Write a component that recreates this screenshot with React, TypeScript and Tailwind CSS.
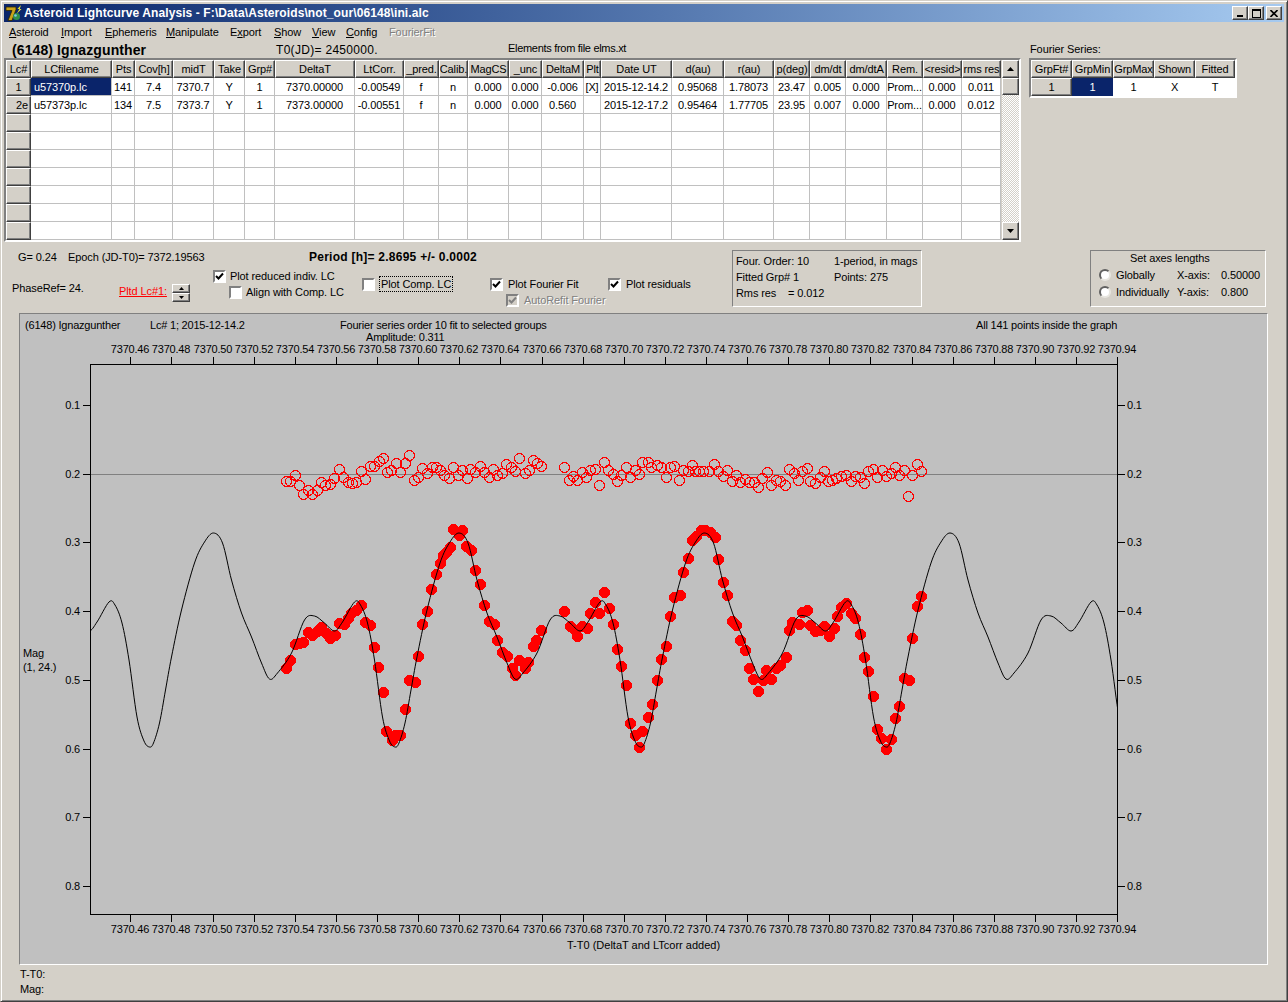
import React from 'react';

const raised = 'border border-t-white border-l-white border-r-[#404040] border-b-[#404040] shadow-[inset_-1px_-1px_0_#808080] bg-[#d4d0c8]';
const sunken = 'border-2 border-t-[#808080] border-l-[#808080] border-r-white border-b-white';
const etched = 'border border-t-[#808080] border-l-[#808080] border-r-white border-b-white';
const gridCols = 'grid grid-cols-[25px_81px_23px_38px_41px_31px_30px_80px_49px_35px_29px_41px_33px_42px_17px_71px_52px_50px_36px_36px_41px_36px_39px_39px]';

const headers = ['Lc#', 'LCfilename', 'Pts', 'Cov[h]', 'midT', 'Take', 'Grp#', 'DeltaT', 'LtCorr.', '_pred.', 'Calib.', 'MagCS', '_unc', 'DeltaM', 'Plt', 'Date UT', 'd(au)', 'r(au)', 'p(deg)', 'dm/dt', 'dm/dtA', 'Rem.', '<resid>', 'rms res'];
const rows = [
  ['1', 'u57370p.lc', '141', '7.4', '7370.7', 'Y', '1', '7370.00000', '-0.00549', 'f', 'n', '0.000', '0.000', '-0.006', '[X]', '2015-12-14.2', '0.95068', '1.78073', '23.47', '0.005', '0.000', 'Prom...', '0.000', '0.011'],
  ['2e', 'u57373p.lc', '134', '7.5', '7373.7', 'Y', '1', '7373.00000', '-0.00551', 'f', 'n', '0.000', '0.000', '0.560', '', '2015-12-17.2', '0.95464', '1.77705', '23.95', '0.007', '0.000', 'Prom...', '0.000', '0.012'],
  ...Array.from({ length: 7 }, () => Array.from({ length: 24 }, () => '')),
];

const menu = [
  { label: 'Asteroid', key: 'A', width: 'w-[52px]' },
  { label: 'Import', key: 'I', width: 'w-[44px]' },
  { label: 'Ephemeris', key: 'E', width: 'w-[61px]' },
  { label: 'Manipulate', key: 'M', width: 'w-[64px]' },
  { label: 'Export', key: 'x', width: 'w-[44px]' },
  { label: 'Show', key: 'S', width: 'w-[38px]' },
  { label: 'View', key: 'V', width: 'w-[34px]' },
  { label: 'Config', key: 'C', width: 'w-[43px]' },
];

// one cycle of the fit, in screen pixels, repeated across the plot
const PERIOD = 245.5;
const cycle: [number, number][] = [
  [395, 747], [399, 743], [405, 723], [411, 690], [417, 657], [427, 610], [440, 563], [450, 542], [459, 533], [468, 543], [477, 580], [487, 613],
  [497, 637], [507, 663], [515, 679], [523, 673], [537, 653], [550, 620], [560, 616], [570, 623], [580, 631], [588, 622], [600, 602],
  [606, 605], [613, 623], [620, 660], [628, 717], [635, 741],
];

function curvePath() {
  const pts: [number, number][] = [];
  for (let k = -2; k <= 3; k++) cycle.forEach(([x, y]) => pts.push([x + k * PERIOD, y]));
  let d = `M${pts[0][0]},${pts[0][1]}`;
  for (let i = 0; i < pts.length - 1; i++) {
    const p0 = pts[Math.max(i - 1, 0)];
    const p1 = pts[i];
    const p2 = pts[i + 1];
    const p3 = pts[Math.min(i + 2, pts.length - 1)];
    d += ` C${p1[0] + (p2[0] - p0[0]) / 6},${p1[1] + (p2[1] - p0[1]) / 6} ${p2[0] - (p3[0] - p1[0]) / 6},${p2[1] - (p3[1] - p1[1]) / 6} ${p2[0]},${p2[1]}`;
  }
  return d;
}

// measured off the 3x crops: [crop x, crop y]; crops start at (260,440) and (590,440)
const filledA = [[80,686],[92,660],[105,612],[118,610],[130,607],[145,578],[158,585],[172,575],[185,563],[198,580],[212,595],[225,585],[237,550],[252,553],[265,535],[275,520],[290,510],[305,495],[317,548],[332,557],[343,622],[355,683],[370,757],[380,875],[397,902],[405,885],[420,885],[437,808],[447,722],[465,727],[475,650],[487,553],[502,515],[514,448],[530,403],[541,370],[550,347],[560,338],[570,323],[580,268],[607,270],[597,287],[620,320],[635,332],[647,390],[660,432],[673,495],[687,545],[703,553],[712,601],[727,637],[742,650],[757,685],[765,705],[795,685],[778,660],[805,667],[820,618],[830,600],[845,572],[913,514],[930,560],[945,572],[953,588],[967,560],[982,566],[992,520],[1005,487],[1018,520],[1033,457]];
const filledB = [[57,505],[70,552],[82,628],[94,680],[109,737],[121,850],[135,885],[148,923],[158,873],[175,832],[187,793],[202,720],[214,657],[229,620],[241,529],[252,472],[270,465],[281,397],[295,354],[307,300],[320,290],[333,270],[345,272],[360,278],[375,292],[385,358],[400,427],[412,465],[428,545],[440,555],[451,602],[466,630],[478,685],[491,718],[505,753],[520,720],[530,692],[545,718],[560,685],[572,675],[588,652],[598,570],[607,547],[627,552],[637,518],[652,510],[662,555],[675,575],[690,570],[703,560],[718,590],[733,565],[742,528],[755,503],[768,490],[785,520],[797,535],[812,583],[823,652],[835,694],[850,769],[862,867],[875,895],[888,928],[905,898],[917,835],[928,798],[942,714],[957,720],[968,595],[983,498],[994,468]];
const openA = [[78,123],[92,123],[106,106],[118,135],[130,163],[145,150],[157,163],[172,152],[184,127],[197,137],[212,133],[223,115],[238,88],[250,113],[264,128],[277,129],[290,126],[304,94],[316,118],[330,80],[343,80],[357,65],[371,55],[382,98],[395,90],[409,70],[422,96],[437,70],[449,46],[462,122],[476,112],[487,84],[503,100],[516,83],[530,82],[541,92],[553,106],[568,115],[579,82],[596,105],[607,90],[622,115],[632,88],[647,96],[660,80],[673,97],[688,113],[701,87],[712,107],[727,100],[740,73],[753,83],[767,94],[778,55],[795,100],[808,90],[820,60],[832,70],[845,79],[913,82],[927,122],[940,110],[953,122],[967,97],[979,112],[992,92],[1005,87],[1018,135],[1033,67],[1045,92]];
const openB = [[69,102],[81,125],[94,106],[109,82],[121,112],[135,90],[148,102],[158,67],[174,67],[185,82],[203,75],[214,82],[229,112],[241,82],[253,80],[268,120],[280,92],[294,95],[307,75],[315,93],[327,93],[340,93],[358,93],[373,72],[385,95],[400,110],[412,90],[426,124],[438,105],[452,127],[466,118],[478,127],[492,127],[505,143],[518,115],[533,97],[545,135],[558,122],[570,125],[586,135],[598,87],[612,100],[626,120],[637,95],[652,85],[662,124],[677,130],[690,113],[703,93],[716,125],[727,120],[740,115],[755,110],[768,105],[783,125],[797,108],[810,113],[823,130],[835,95],[850,87],[862,113],[878,90],[890,108],[903,100],[916,83],[928,107],[943,92],[955,170],[968,107],[983,72],[994,95]];

const toScreen = (list: number[][], ox: number) => list.map(([x, y]) => [Math.floor(ox + x / 3) + 0.5, Math.floor(440 + y / 3) + 0.5]);
const filled = [...toScreen(filledA, 260), ...toScreen(filledB, 590)];
const open = [...toScreen(openA, 260), ...toScreen(openB, 590)];

const xTicks = Array.from({ length: 25 }, (_, i) => ({ x: Math.round(130.3 + i * 41.12), label: (7370.46 + i * 0.02).toFixed(2) }));
const yTicks = [0.1, 0.2, 0.3, 0.4, 0.5, 0.6, 0.7, 0.8].map((v, i) => ({ y: Math.round(405 + i * 68.7), label: v.toFixed(1) }));

function Check({ checked, disabled }: { checked?: boolean; disabled?: boolean }) {
  return (
    <span className={`${sunken} flex h-[13px] w-[13px] shrink-0 items-center justify-center ${disabled ? 'bg-[#d4d0c8]' : 'bg-white'}`}>
      {checked && (
        <svg width="9" height="9" viewBox="0 0 9 9">
          <path d="M1 4 L3.5 6.5 L8 1.5" fill="none" stroke={disabled ? '#808080' : '#000'} strokeWidth="2" />
        </svg>
      )}
    </span>
  );
}

function Radio() {
  return <span className="h-[12px] w-[12px] shrink-0 rounded-full border-2 border-t-[#606060] border-l-[#606060] border-r-[#e8e6e0] border-b-[#e8e6e0] bg-white" />;
}

function Tri({ down, size = 7 }: { down?: boolean; size?: number }) {
  return (
    <svg width={size} height={Math.ceil(size / 2)} viewBox="0 0 7 4">
      <path d={down ? 'M0 0 H7 L3.5 4 Z' : 'M0 4 H7 L3.5 0 Z'} fill="#000" />
    </svg>
  );
}

function AppIcon() {
  return (
    <svg width="17" height="17" viewBox="0 0 17 17" className="shrink-0">
      <path d="M1 2 H11 V4.5 L7 15.5 H3 L7 5.5 H1 Z" fill="#c9a21a" stroke="#2e2600" strokeWidth="0.8" />
      <path d="M16 0 L12.5 4 L14.5 4 L11.5 9 L16.5 4 L14.7 4 Z" fill="#f5ee30" />
      <circle cx="11.5" cy="11.5" r="3.5" fill="#2f8f4a" />
      <circle cx="10.5" cy="10.5" r="1.3" fill="#7fc7e8" />
    </svg>
  );
}

export default function App() {
  return (
    <div className="h-[1002px] w-[1288px] overflow-hidden border border-t-[#d4d0c8] border-l-[#d4d0c8] border-r-[#404040] border-b-[#404040] bg-[#d4d0c8] p-[3px] font-['Liberation_Sans',sans-serif] text-[11px] leading-[14px] tracking-[-0.1px] text-black shadow-[inset_1px_1px_0_#fff,inset_-1px_-1px_0_#808080]">
      {/* title bar */}
      <div className="flex h-[18px] items-center bg-linear-to-r from-[#0a246a] to-[#a6caf0] pl-[1px] pr-[2px]">
        <AppIcon />
        <span className="ml-[2px] whitespace-nowrap text-[12px] font-bold tracking-[0.1px] text-white">Asteroid Lightcurve Analysis - F:\Data\Asteroids\not_our\06148\ini.alc</span>
        <div className="ml-auto flex items-center">
          <button className={`${raised} flex h-[14px] w-[16px] items-end justify-center pb-[2px]`}>
            <span className="h-[2px] w-[6px] bg-black" />
          </button>
          <button className={`${raised} flex h-[14px] w-[16px] items-center justify-center`}>
            <span className="h-[9px] w-[9px] border border-t-2 border-black" />
          </button>
          <button className={`${raised} ml-[2px] flex h-[14px] w-[16px] items-center justify-center`}>
            <svg width="8" height="7" viewBox="0 0 8 7"><path d="M0.5 0 L7.5 7 M7.5 0 L0.5 7" stroke="#000" strokeWidth="1.6" /></svg>
          </button>
        </div>
      </div>

      {/* menu */}
      <div className="flex h-[19px] items-center pl-[5px]">
        {menu.map((m) => (
          <span key={m.label} className={m.width}>
            {m.label.split(m.key).map((part, i) => (i === 0 ? part : <React.Fragment key={i}><u>{m.key}</u>{part}</React.Fragment>))}
          </span>
        ))}
        <span className="text-[#808080] [text-shadow:1px_1px_0_#fff]">FourierFit</span>
      </div>

      {/* grids */}
      <div className="flex">
        <div className="w-[1017px]">
          <div className="flex h-[17px] items-center">
            <span className="ml-[8px] w-[264px] whitespace-nowrap text-[14px] font-bold tracking-[0.1px]">(6148) Ignazgunther</span>
            <span className="w-[232px] text-[12px] tracking-[0.3px]">T0(JD)= 2450000.</span>
            <span className="-mt-[4px] tracking-[-0.3px]">Elements from file elms.xt</span>
          </div>
          <div className={`${sunken} flex bg-[#d4d0c8]`}>
            <div className="w-[995px] bg-white">
              <div className={gridCols}>
                {headers.map((h) => (
                  <div key={h} className={`${raised} flex h-[18px] items-center justify-center whitespace-nowrap overflow-hidden`}>{h}</div>
                ))}
              </div>
              {rows.map((row, r) => (
                <div key={r} className={gridCols}>
                  {row.map((cell, c) =>
                    c === 0 ? (
                      <div key={c} className={`${raised} flex h-[18px] items-center ${cell === '2e' ? 'justify-end pr-[2px]' : 'justify-center'}`}>{cell}</div>
                    ) : (
                      <div
                        key={c}
                        className={`flex h-[18px] items-center overflow-hidden whitespace-nowrap border-r border-b border-[#c0c0c0] ${c === 1 ? 'justify-start pl-[3px]' : 'justify-center'} ${c === 1 && r === 0 ? 'bg-[#0a246a] text-white' : ''}`}
                      >
                        {cell}
                      </div>
                    ),
                  )}
                </div>
              ))}
            </div>
            <div className="ml-[1px] flex w-[17px] flex-col bg-[repeating-conic-gradient(#d4d0c8_0_25%,#fff_0_50%)] bg-[length:2px_2px]">
              <div className={`${raised} flex h-[18px] items-center justify-center`}><Tri /></div>
              <div className={`${raised} h-[17px]`} />
              <div className={`${raised} mt-auto flex h-[18px] items-center justify-center`}><Tri down /></div>
            </div>
          </div>
        </div>

        <div className="ml-[8px]">
          <div className="-mt-[2px] flex h-[19px] items-center pl-[1px]">Fourier Series:</div>
          <div className={`${sunken} w-[208px] bg-white`}>
            <div className="grid grid-cols-[41px_41px_41px_41px_40px]">
              {['GrpFt#', 'GrpMin', 'GrpMax', 'Shown', 'Fitted'].map((h) => (
                <div key={h} className={`${raised} flex h-[18px] items-center justify-center overflow-hidden whitespace-nowrap`}>{h}</div>
              ))}
              <div className={`${raised} flex h-[18px] items-center justify-center`}>1</div>
              <div className="flex h-[18px] items-center justify-center bg-[#0a246a] text-white">1</div>
              <div className="flex h-[18px] items-center justify-center">1</div>
              <div className="flex h-[18px] items-center justify-center">X</div>
              <div className="flex h-[18px] items-center justify-center">T</div>
            </div>
          </div>
        </div>
      </div>

      {/* controls */}
      <div className="flex h-[71px] whitespace-nowrap">
        <div className="w-[728px]">
          <div className="mt-[8px] flex h-[14px] items-center pl-[14px]">
            <span className="w-[50px]">G= 0.24</span>
            <span className="w-[241px]">Epoch (JD-T0)= 7372.19563</span>
            <span className="text-[12px] font-bold tracking-[0.25px]">Period [h]= 2.8695 +/- 0.0002</span>
          </div>
          <div className="mt-[4px] flex">
            <div className="w-[115px] pl-[8px] pt-[13px]">PhaseRef= 24.</div>
            <div className="w-[53px] pt-[16px] text-[#ff0000] underline">Pltd Lc#1:</div>
            <div className="w-[41px] pt-[16px]">
              <div className={`${raised} flex h-[9px] w-[18px] items-center justify-center`}><Tri size={5} /></div>
              <div className={`${raised} flex h-[9px] w-[18px] items-center justify-center`}><Tri down size={5} /></div>
            </div>
            <div className="w-[149px]">
              <div className="flex h-[16px] items-center gap-[4px]"><Check checked /><span>Plot reduced indiv. LC</span></div>
              <div className="ml-[16px] flex h-[16px] items-center gap-[4px]"><Check /><span>Align with Comp. LC</span></div>
            </div>
            <div className="w-[128px] pt-[8px]">
              <div className="flex h-[16px] items-center gap-[4px]">
                <Check />
                <span className="border border-dotted border-black px-[1px]">Plot Comp. LC</span>
              </div>
            </div>
            <div className="w-[118px] pt-[8px]">
              <div className="flex h-[16px] items-center gap-[5px]"><Check checked /><span>Plot Fourier Fit</span></div>
              <div className="ml-[16px] flex h-[16px] items-center gap-[5px] text-[#808080]"><Check checked disabled /><span className="[text-shadow:1px_1px_0_#fff]">AutoRefit Fourier</span></div>
            </div>
            <div className="pt-[8px]">
              <div className="flex h-[16px] items-center gap-[5px]"><Check checked /><span>Plot residuals</span></div>
            </div>
          </div>
        </div>

        <div className={`${etched} mt-[8px] h-[57px] w-[190px] pl-[3px] pt-[2px] leading-[16px]`}>
          <div className="flex"><span className="w-[98px]">Four. Order: 10</span><span>1-period, in mags</span></div>
          <div className="flex"><span className="w-[98px]">Fitted Grp# 1</span><span>Points: 275</span></div>
          <div>Rms res &nbsp;&nbsp;&nbsp;= 0.012</div>
        </div>

        <div className={`${etched} ml-[168px] mt-[8px] h-[57px] w-[176px] pl-[8px]`}>
          <div className="pl-[31px]">Set axes lengths</div>
          <div className="mt-[1px] flex h-[17px] items-center">
            <Radio />
            <span className="ml-[5px] w-[61px]">Globally</span>
            <span className="w-[44px]">X-axis:</span>
            <span>0.50000</span>
          </div>
          <div className="flex h-[17px] items-center">
            <Radio />
            <span className="ml-[5px] w-[61px]">Individually</span>
            <span className="w-[44px]">Y-axis:</span>
            <span>0.800</span>
          </div>
        </div>
      </div>

      {/* plot */}
      <div className="ml-[15px] h-[652px] w-[1249px] border border-t-[#808080] border-l-[#808080] border-r-white border-b-white bg-[#c0c0c0]">
        <svg width="1247" height="650" viewBox="20 314 1247 650" fontSize="11" letterSpacing="-0.2" fill="#000">
          <defs>
            <clipPath id="plot-area"><rect x="90" y="364" width="1027" height="550" /></clipPath>
          </defs>
          <text x="25" y="329">(6148) Ignazgunther</text>
          <text x="150" y="329">Lc# 1; 2015-12-14.2</text>
          <text x="340" y="329">Fourier series order 10 fit to selected groups</text>
          <text x="366" y="341">Amplitude: 0.311</text>
          <text x="976" y="329">All 141 points inside the graph</text>
          <text x="23" y="657">Mag</text>
          <text x="23" y="671">(1, 24.)</text>
          <text x="567" y="949" letterSpacing="0">T-T0 (DeltaT and LTcorr added)</text>

          <line x1="90" y1="474.5" x2="1117" y2="474.5" stroke="#808080" />
          <rect x="90.5" y="364.5" width="1027" height="550" fill="none" stroke="#000" />
          {xTicks.map((t) => (
            <g key={t.label}>
              <line x1={t.x + 0.5} y1="357" x2={t.x + 0.5} y2="364" stroke="#000" />
              <line x1={t.x + 0.5} y1="915" x2={t.x + 0.5} y2="922" stroke="#000" />
              <text x={t.x} y="353" textAnchor="middle">{t.label}</text>
              <text x={t.x} y="933" textAnchor="middle">{t.label}</text>
            </g>
          ))}
          {yTicks.map((t) => (
            <g key={t.label}>
              <line x1="83" y1={t.y + 0.5} x2="90" y2={t.y + 0.5} stroke="#000" />
              <line x1="1118" y1={t.y + 0.5} x2="1125" y2={t.y + 0.5} stroke="#000" />
              <text x="80" y={t.y + 4} textAnchor="end">{t.label}</text>
              <text x="1127" y={t.y + 4}>{t.label}</text>
            </g>
          ))}

          {open.map(([x, y], i) => (
            <circle key={i} cx={x} cy={y} r="5" fill="none" stroke="#ff0000" shapeRendering="crispEdges" />
          ))}
          {filled.map(([x, y], i) => (
            <circle key={i} cx={x} cy={y} r="5.5" fill="#ff0000" shapeRendering="crispEdges" />
          ))}
          <path d={curvePath()} fill="none" stroke="#000" clipPath="url(#plot-area)" />
        </svg>
      </div>

      {/* cursor readout */}
      <div className="pl-[16px] pt-[2px] leading-[15px]">
        <div>T-T0:</div>
        <div>Mag:</div>
      </div>
    </div>
  );
}
